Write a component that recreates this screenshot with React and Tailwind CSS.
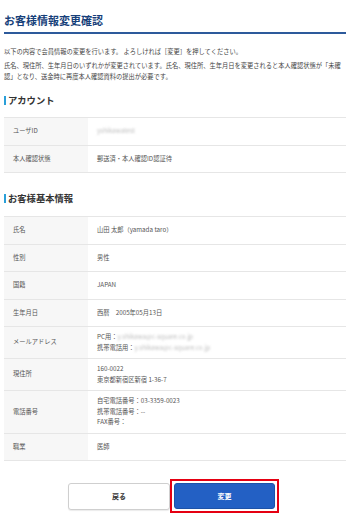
import React from "react";

const font = { fontFamily: '"Noto Sans CJK JP", "Noto Sans", sans-serif' };

function Row({ label, children }) {
  return (
    <div className="flex min-h-[27.5px] border-b border-[#e6e6e6]">
      <div className="w-[84px] shrink-0 bg-[#f7f7f7] pl-[9px] flex items-center text-[#555]">
        {label}
      </div>
      <div className="flex-1 pl-[9px] py-[5px] flex flex-col justify-center text-[#555]">
        {children}
      </div>
    </div>
  );
}

function Blur({ children }) {
  return <span className="text-[#bdbdbd] blur-[1px]">{children}</span>;
}

function Heading({ children, className = "" }) {
  return (
    <div className={"flex items-center " + className}>
      <div className="w-[2px] h-[9px] bg-[#2a9fd8] mr-[2px]" />
      <div className="text-[9.3px] leading-[12px] font-bold text-[#333]">{children}</div>
    </div>
  );
}

export default function App() {
  return (
    <div
      className="w-[350px] h-[530px] bg-white px-[4px] text-[6.25px] leading-[10.5px] overflow-hidden"
      style={font}
    >
      <div className="pt-[13px] pb-[5px] border-b-2 border-[#2d5a9b]">
        <div className="text-[11px] leading-[14px] font-bold text-[#173f7a]">
          お客様情報変更確認
        </div>
      </div>
      <p className="mt-[12px] text-[#444] leading-[11px]">
        以下の内容で会員情報の変更を行います。 よろしければ［変更］を押してください。
      </p>
      <p className="mt-[3px] text-[#444] leading-[11px]">
        氏名、現住所、生年月日のいずれかが変更されています。氏名、現住所、生年月日を変更されると本人確認状態が「未確認」となり、送金時に再度本人確認資料の提出が必要です。
      </p>

      <Heading className="mt-[12px]">アカウント</Heading>
      <div className="mt-[11px] border-t border-[#e6e6e6]">
        <Row label="ユーザID">
          <Blur>yshikawatest</Blur>
        </Row>
        <Row label="本人確認状態">郵送済・本人確認ID認証待</Row>
      </div>

      <Heading className="mt-[19px]">お客様基本情報</Heading>
      <div className="mt-[12px] border-t border-[#e6e6e6]">
        <Row label="氏名">山田 太郎（yamada taro）</Row>
        <Row label="性別">男性</Row>
        <Row label="国籍">JAPAN</Row>
        <Row label="生年月日">西暦　2005年05月13日</Row>
        <Row label="メールアドレス">
          <div>
            PC用：<Blur>y.shikawa@c-square.co.jp</Blur>
          </div>
          <div>
            携帯電話用：<Blur>y.shikawa@c-square.co.jp</Blur>
          </div>
        </Row>
        <Row label="現住所">
          <div>160-0022</div>
          <div>東京都新宿区新宿 1-36-7</div>
        </Row>
        <Row label="電話番号">
          <div>自宅電話番号：03-3359-0023</div>
          <div>携帯電話番号：--</div>
          <div>FAX番号：</div>
        </Row>
        <Row label="職業">医師</Row>
      </div>

      <div className="mt-[18px] flex justify-center items-center pr-[3px]">
        <button className="w-[102px] h-[27px] rounded-[3px] border border-[#cfcfcf] bg-white text-[7px] font-bold text-[#333] shadow-[0_1px_1px_rgba(0,0,0,0.08)]">
          戻る
        </button>
        <div className="border-2 border-[#e50012] p-[2px]">
          <button className="w-[101px] h-[26px] rounded-[3px] bg-[#2360c4] border border-[#1d52a8] text-[7px] font-bold text-white flex items-center justify-center">
            変更
          </button>
        </div>
      </div>
    </div>
  );
}
